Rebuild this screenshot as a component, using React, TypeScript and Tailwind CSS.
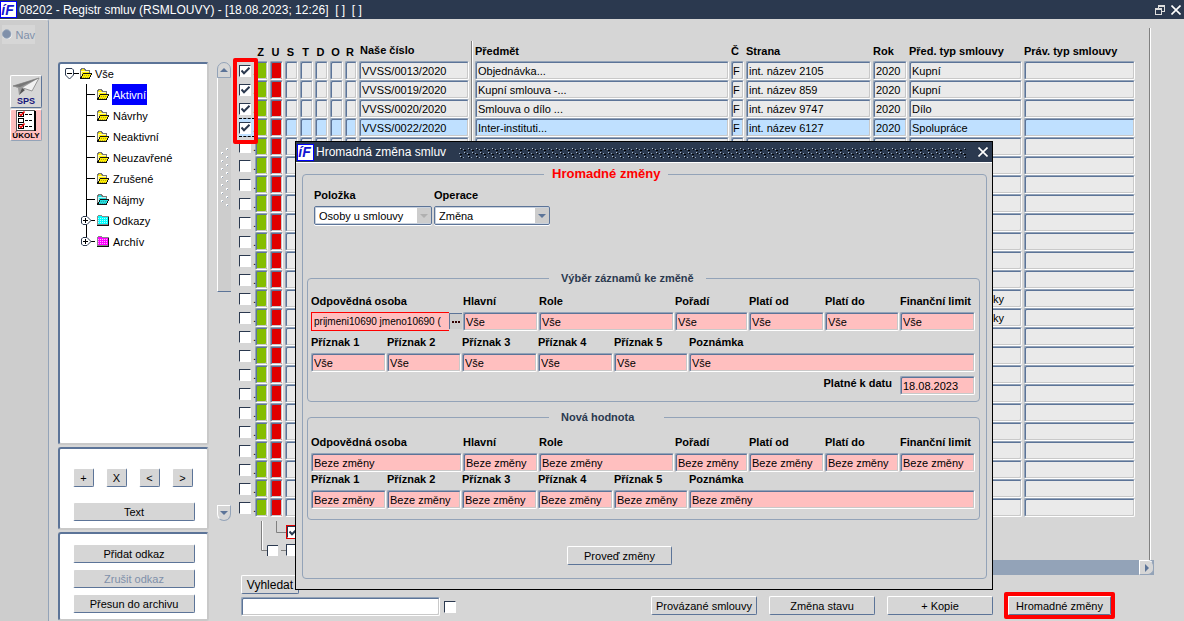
import React from "react";

const BEVEL_IN =
  "border border-t-[#93a3b8] border-l-[#93a3b8] border-r-white border-b-white shadow-[inset_1px_1px_0_#5c7498,inset_-1px_-1px_0_#c9c9c9]";
const BEVEL_OUT =
  "rounded-[2px] border border-t-white border-l-white border-r-[#5c7498] border-b-[#5c7498] bg-[#d6d6d6]";
const PANEL =
  "rounded-[3px] border-2 border-t-[#5c7498] border-l-[#5c7498] border-r-[#c9c9c9] border-b-[#c9c9c9] bg-white";

function Logo() {
  return (
    <span className="flex size-[17px] shrink-0 items-center justify-center border border-[#0000ff] bg-white pr-[2px] text-[14px] leading-none font-bold text-[#1414d2] italic">
      íF
    </span>
  );
}

function CloseIcon() {
  return (
    <svg width="10" height="10" viewBox="0 0 10 10" stroke="#fff" strokeWidth="1.6">
      <path d="M0.5 0.5L9.5 9.5M9.5 0.5L0.5 9.5" />
    </svg>
  );
}

function Check({ checked = false, label, alert = false }: { checked?: boolean; label: string; alert?: boolean }) {
  return (
    <span className={alert ? "relative flex border border-[#e00000]" : "relative flex"}>
      <input
        type="checkbox"
        defaultChecked={checked}
        aria-label={label}
        className="size-[12px] shrink-0 appearance-none border border-t-[#2b394f] border-r-white border-b-white border-l-[#2b394f] bg-white"
      />
      {checked && (
        <svg className="pointer-events-none absolute top-[2px] left-[2px]" width="9" height="8" viewBox="0 0 9 8" fill="none" stroke="#2b394f" strokeWidth="2">
          <path d="M0.5 3.5L3 6.2L8.5 0.8" />
        </svg>
      )}
    </span>
  );
}

function Button({ children, className = "", disabled = false }: { children: React.ReactNode; className?: string; disabled?: boolean }) {
  return (
    <button
      type="button"
      disabled={disabled}
      className={`${BEVEL_OUT} flex h-[19px] items-center justify-center whitespace-nowrap ${disabled ? "text-[#7f90aa]" : "text-black"} ${className}`}
    >
      {children}
    </button>
  );
}

/* ---------- navigation tree ---------- */

function OpenFolder({ color }: { color: string }) {
  return (
    <svg className="shrink-0" width="14" height="12" viewBox="0 0 14 12" shapeRendering="crispEdges">
      <path d="M1.5 10.5V2.5L2.5 0.5H5.5L6.5 2.5H10.5V5" fill={color} stroke="#777" />
      <path d="M2 3.5H10M2.5 3V9" fill="none" stroke="#fff" opacity="0.7" />
      <path d="M1.5 10.5L4.5 5.5H12.5L10.5 10.5Z" fill={color} stroke="#111" />
      <path d="M5 7.5H11M4 9.5H10" stroke="#444" strokeDasharray="1 1" opacity="0.4" />
    </svg>
  );
}

function ClosedFolder({ color }: { color: string }) {
  return (
    <svg className="shrink-0" width="14" height="12" viewBox="0 0 14 12" shapeRendering="crispEdges">
      <path d="M1.5 9.5V1.5L2.5 0.5H5.5L6.5 1.5H12.5V9.5Z" fill={color} stroke="#888" />
      <path d="M1 10.5H12.5V2" fill="none" stroke="#111" />
      <path d="M2 3.5H12M2 5.5H12M2 7.5H12" stroke="#fff" strokeDasharray="1 1" opacity="0.7" />
    </svg>
  );
}

type Node = { name: string; icon: "open" | "closed"; color: string; expandable?: boolean; selected?: boolean };

const NODES: Node[] = [
  { name: "Aktivní", icon: "open", color: "#ffee00", selected: true },
  { name: "Návrhy", icon: "open", color: "#ffee00" },
  { name: "Neaktivní", icon: "open", color: "#ffee00" },
  { name: "Neuzavřené", icon: "open", color: "#ffee00" },
  { name: "Zrušené", icon: "open", color: "#ffee00" },
  { name: "Nájmy", icon: "open", color: "#22dddd" },
  { name: "Odkazy", icon: "closed", color: "#00ffff", expandable: true },
  { name: "Archív", icon: "closed", color: "#ff00ff", expandable: true },
];

function Tree() {
  return (
    <ul className={`${PANEL} h-[383px] text-[11px]`}>
      <li className="pl-[3px]">
        <div className="flex h-[20px] items-center">
          <svg width="16" height="14" viewBox="0 0 16 14" fill="none" stroke="#2b394f">
            <path d="M3 1.5H9L10.5 3V8L6.5 12L2.5 8V3Z" fill="#fff" />
            <path d="M4 6.5H9" stroke="#000" />
            <path d="M11 6.5H16" stroke="#000" />
          </svg>
          <OpenFolder color="#ffee00" />
          <span className="pl-[2px]">Vše</span>
        </div>
        <ul className="pl-[15px]">
          {NODES.map((n, i) => (
            <li key={n.name} className="flex h-[21px] items-center">
              <svg className="shrink-0" width="18" height="21" viewBox="0 0 18 21" fill="none" stroke="#000">
                <path d={i === NODES.length - 1 ? "M8.5 0V10" : "M8.5 0V21"} />
                <path d="M8 10.5H17" />
                {n.expandable && (
                  <>
                    <path d="M5 6.5H9L13 10.5L9 14.5H5L3.5 13V8Z" fill="#fff" stroke="#2b394f" />
                    <path d="M5 10.5H10M7.5 8V13" />
                  </>
                )}
              </svg>
              {n.icon === "open" ? <OpenFolder color={n.color} /> : <ClosedFolder color={n.color} />}
              <a
                href="#"
                className={
                  n.selected
                    ? "ml-[2px] flex h-[21px] items-center bg-[#0000ff] px-[1px] text-white"
                    : "ml-[2px] flex h-[21px] items-center px-[1px] text-black"
                }
              >
                {n.name}
              </a>
            </li>
          ))}
        </ul>
      </li>
    </ul>
  );
}

function Rail() {
  return (
    <nav className="flex w-[49px] shrink-0 flex-col items-start rounded-tr-[3px] border-t border-r border-t-white border-r-[#93a3b8] bg-[#cdcdcd]">
      <button type="button" className="mt-[5px] ml-[2px] flex h-[19px] w-[33px] items-center gap-[3px] bg-[#d6d6d6] text-[11px] text-[#7f90aa]">
        <svg width="11" height="11" viewBox="0 0 11 11">
          <circle cx="5.5" cy="5.5" r="5" fill="#fff" />
          <circle cx="5" cy="5" r="4.5" fill="#7f90aa" stroke="#93a3b8" />
        </svg>
        Nav
      </button>
      <button type="button" className={`${BEVEL_OUT} mt-[31px] ml-[10px] flex h-[33px] w-[32px] flex-col items-center`}>
        <svg width="28" height="21" viewBox="0 0 28 21">
          <path d="M1 10L27 2L20 15L11 12Z" fill="#f1f1f1" stroke="#777" strokeWidth="0.7" />
          <path d="M1 10L27 2L10 12L7 19L6 12Z" fill="#9a9a9a" />
          <path d="M10 12L13 14L7 19Z" fill="#555" />
          <path d="M1 10L27 2L8 11Z" fill="#777" />
        </svg>
        <span className="text-[9px] leading-[9px] font-bold text-[#14147a]">SPS</span>
      </button>
      <button type="button" className="mt-[1px] ml-[10px] flex h-[32px] w-[32px] flex-col items-center rounded-[2px] border border-t-white border-r-[#93a3b8] border-b-[#93a3b8] border-l-white bg-[#ffbfbf]">
        <svg width="22" height="21" viewBox="0 0 22 21">
          <rect x="1.5" y="0.5" width="18" height="20" fill="#fff" stroke="#555" />
          <path d="M20 1V21" stroke="#000" strokeWidth="2" />
          <g fill="none" stroke="#000">
            <rect x="3.5" y="2.5" width="5" height="4" />
            <rect x="3.5" y="8.5" width="5" height="4" />
            <rect x="3.5" y="14.5" width="5" height="4" />
          </g>
          <path d="M10 4.5H18M10 10.5H18M10 16.5H18" stroke="#000" strokeDasharray="3 1" />
          <path d="M4 3.5L6 5.5L9.5 1.5M4 15.5L6 17.5L9.5 13.5" fill="none" stroke="#f00000" strokeWidth="1.5" />
        </svg>
        <span className="text-[8px] leading-[9px] font-bold text-black">ÚKOLY</span>
      </button>
    </nav>
  );
}

/* ---------- contract table ---------- */

type Row = { no: string; subject: string; f: string; party: string; year: string; type: string };

const DATA: Row[] = [
  { no: "VVSS/0013/2020", subject: "Objednávka...", f: "F", party: "int. název 2105", year: "2020", type: "Kupní" },
  { no: "VVSS/0019/2020", subject: "Kupní smlouva -...", f: "F", party: "int. název 859", year: "2020", type: "Kupní" },
  { no: "VVSS/0020/2020", subject: "Smlouva o dílo ...", f: "F", party: "int. název 9747", year: "2020", type: "Dílo" },
  { no: "VVSS/0022/2020", subject: "Inter-instituti...", f: "F", party: "int. název 6127", year: "2020", type: "Spolupráce" },
];
const EMPTY: Row = { no: "", subject: "", f: "", party: "", year: "", type: "" };
const ROWS: Row[] = Array.from({ length: 24 }, (_, i) => DATA[i] ?? EMPTY);
const SELECTED = 3;

function Cell({ children, bg, className = "pl-[2px]" }: { children?: React.ReactNode; bg: string; className?: string }) {
  return (
    <td className="p-0 pr-[2px] align-top">
      <div className={`${BEVEL_IN} ${bg} flex h-[19px] items-center overflow-hidden rounded-[2px] whitespace-nowrap ${className}`}>
        {children}
      </div>
    </td>
  );
}

function Contracts() {
  return (
    <div className="relative flex-1">
      <table className="w-full table-fixed border-collapse text-[11px] leading-[14px]">
        <colgroup>
          <col className="w-[16px]" />
          <col className="w-[15px]" />
          <col className="w-[15px]" />
          <col className="w-[15px]" />
          <col className="w-[15px]" />
          <col className="w-[15px]" />
          <col className="w-[15px]" />
          <col className="w-[14px]" />
          <col className="w-[112px]" />
          <col className="w-[4px]" />
          <col />
          <col className="w-[15px]" />
          <col className="w-[127px]" />
          <col className="w-[36px]" />
          <col className="w-[115px]" />
          <col className="w-[113px]" />
        </colgroup>
        <thead>
          <tr className="h-[20px] text-left align-top whitespace-nowrap">
            <th className="p-0" aria-label="Výběr" />
            {["Z", "U", "S", "T", "D", "O", "R"].map((h) => (
              <th key={h} className="p-0 pt-[4px] pr-[4px] text-center">
                {h}
              </th>
            ))}
            <th className="p-0 pt-[2px] pl-[1px]">Naše číslo</th>
            <th className="p-0">
              <div className="h-[20px] w-[2px] border-r border-l border-r-white border-l-[#808080]" />
            </th>
            {["Předmět", "Č", "Strana", "Rok", "Před. typ smlouvy", "Práv. typ smlouvy"].map((h) => (
              <th key={h} className="p-0 pt-[3px]">
                {h}
              </th>
            ))}
          </tr>
        </thead>
        <tbody>
          {ROWS.map((r, i) => {
            const bg = i === SELECTED ? "bg-[#bfe0ff]" : "bg-[#eaeaea]";
            return (
              <tr key={i} className="h-[19px]">
                <td className="p-0 align-top">
                  <div
                    className={
                      i === SELECTED
                        ? "flex h-[19px] items-center gap-[2px] border-y border-dashed border-black bg-[#bfe0ff]"
                        : "flex h-[19px] items-center gap-[2px]"
                    }
                  >
                    <Check checked={i < 4} label={`Vybrat řádek ${i + 1}`} />
                    <span>.</span>
                  </div>
                </td>
                <Cell bg="bg-[#84bd00]" />
                <Cell bg="bg-[#e00000]" />
                <Cell bg={bg} />
                <Cell bg={bg} />
                <Cell bg={bg} />
                <Cell bg={bg} />
                <Cell bg={bg} />
                <Cell bg={bg}>{r.no}</Cell>
                {i === 0 && (
                  <td rowSpan={24} className="p-0 align-top">
                    <div className="h-[456px] w-[2px] border-r border-l border-r-white border-l-[#808080]" />
                  </td>
                )}
                <Cell bg={bg}>{r.subject}</Cell>
                <Cell bg={bg} className="pl-[1px]">{r.f}</Cell>
                <Cell bg={bg}>{r.party}</Cell>
                <Cell bg={bg}>{r.year}</Cell>
                {i === 12 || i === 13 ? (
                  <Cell bg={bg} className="pl-[83px]">
                    ky
                  </Cell>
                ) : (
                  <Cell bg={bg}>{r.type}</Cell>
                )}
                <Cell bg={bg} />
              </tr>
            );
          })}
        </tbody>
      </table>
      <div className="pointer-events-none absolute top-[17px] left-[-6px] h-[86px] w-[25px] rounded-[2px] border-4 border-[#ff0000]" />
    </div>
  );
}

function RowScroller() {
  return (
    <div className="mt-[21px] mr-[8px] flex h-[459px] w-[14px] shrink-0 flex-col">
      <button type="button" aria-label="Nahoru" className="flex h-[16px] items-center justify-center rounded-t-full border border-[#93a3b8] bg-[#d6d6d6]">
        <svg width="8" height="4" viewBox="0 0 8 4" fill="#5c7498">
          <path d="M0 4L4 0L8 4Z" />
        </svg>
      </button>
      <div className="flex h-[214px] items-start justify-center border-b border-l border-b-[#5c7498] border-l-white bg-[#cdcdcd] pt-[70px]">
        <svg width="10" height="60" shapeRendering="crispEdges">
          <defs>
            <pattern id="grip" width="10" height="8" patternUnits="userSpaceOnUse">
              <path d="M6 0h2v2h-2zM1 4h2v2h-2z" fill="#fff" />
              <path d="M7 1h1v1h-1zM2 5h1v1h-1z" fill="#93a3b8" />
            </pattern>
          </defs>
          <rect width="10" height="60" fill="url(#grip)" />
        </svg>
      </div>
      <div className="flex-1" />
      <button type="button" aria-label="Dolů" className="flex h-[16px] items-center justify-center rounded-b-full border border-t-white border-r-[#93a3b8] border-b-[#93a3b8] border-l-white bg-[#d6d6d6]">
        <svg width="8" height="4" viewBox="0 0 8 4" fill="#5c7498">
          <path d="M0 0L4 4L8 0Z" />
        </svg>
      </button>
    </div>
  );
}

/* ---------- dialog ---------- */

function Field({ label, value, className = "" }: { label: string; value: string; className?: string }) {
  return (
    <label className={`flex min-w-0 flex-col ${className}`}>
      <span className="h-[18px] font-bold whitespace-nowrap">{label}</span>
      <input
        type="text"
        defaultValue={value}
        className={`${BEVEL_IN} mr-[1px] h-[19px] min-w-0 rounded-[2px] bg-[#ffbfbf] pl-[2px]`}
      />
    </label>
  );
}

function PersonField() {
  return (
    <div className="flex min-w-0 flex-col">
      <label htmlFor="person" className="h-[18px] font-bold whitespace-nowrap">
        Odpovědná osoba
      </label>
      <div className="mr-[1px] flex h-[19px]">
        <input
          id="person"
          type="text"
          defaultValue="prijmeni10690 jmeno10690 ("
          className="min-w-0 flex-1 border border-r-0 border-[#ff0000] bg-[#ffbfbf] pl-[2px] text-[10px]"
        />
        <button type="button" aria-label="Vybrat osobu" className="mt-[1px] flex h-[16px] w-[13px] items-center justify-center border-t border-l border-[#5c7498] bg-[#cdcdcd]">
          <svg width="8" height="2" viewBox="0 0 8 2" fill="#300">
            <path d="M0 0h2v2h-2zM3 0h2v2h-2zM6 0h2v2h-2z" />
          </svg>
        </button>
      </div>
    </div>
  );
}

function Select({ label, value, width, muted = false }: { label: string; value: string; width: string; muted?: boolean }) {
  return (
    <label className={`flex flex-col ${width}`}>
      <span className="h-[18px] font-bold">{label}</span>
      <span className="relative flex">
        <select className="h-[19px] w-full appearance-none rounded-[2px] border border-[#5c7498] bg-white pl-[4px] shadow-[0_1px_0_#fff,inset_0_0_0_1px_#c9d1dc]">
          <option>{value}</option>
        </select>
        <span className="pointer-events-none absolute top-[2px] right-[1px] flex h-[15px] w-[14px] items-center justify-center bg-[#cdcdcd]">
          <svg width="8" height="4" viewBox="0 0 8 4" className={muted ? "fill-[#b0b0b0]" : "fill-[#5c7498]"}>
            <path d="M0 0H8L4 4Z" />
          </svg>
        </span>
      </span>
    </label>
  );
}

const LINE1 = ["Hlavní", "Role", "Pořadí", "Platí od", "Platí do", "Finanční limit"];
const LINE2 = ["Příznak 1", "Příznak 2", "Příznak 3", "Příznak 4", "Příznak 5", "Poznámka"];
const GRID1 = "grid grid-cols-[152px_76px_1fr_74px_76px_75px_76px]";
const GRID2 = "grid grid-cols-[76px_75px_76px_76px_75px_1fr]";

function Dialog() {
  return (
    <div
      role="dialog"
      aria-label="Hromadná změna smluv"
      className="absolute top-[141px] left-[295px] flex w-[698px] flex-col border border-black bg-[#d6d6d6] text-[11px] leading-[14px]"
    >
      <header className="flex h-[21px] items-center border-b border-white bg-[#2b394f] pr-[4px] pl-[1px] text-[12px] text-white">
        <Logo />
        <h2 className="pr-[13px] pl-[2px] whitespace-nowrap">Hromadná změna smluv</h2>
        <svg className="h-[11px] min-w-0 flex-1" shapeRendering="crispEdges">
          <defs>
            <pattern id="bumps" width="8" height="8" patternUnits="userSpaceOnUse">
              <path d="M1 1h1v1h-1zM5 5h1v1h-1z" fill="#b4c0d0" />
              <path d="M4 2h1v1h-1zM0 6h1v1h-1z" fill="#93a3b8" />
              <path d="M2 2h1v1h-1zM6 6h1v1h-1zM5 3h2v1h-2zM1 7h2v1h-2z" fill="#000" />
            </pattern>
          </defs>
          <rect width="100%" height="11" fill="url(#bumps)" />
        </svg>
        <button type="button" aria-label="Zavřít" className="ml-[12px]">
          <CloseIcon />
        </button>
      </header>
      <fieldset className="mt-[3px] mr-[5px] mb-[10px] ml-[6px] flex flex-col rounded-[4px] border border-[#93a3b8] pr-[6px] pb-[13px] pl-[4px]">
        <legend className="ml-[237px] px-[8px] text-[13px] leading-[16px] font-bold text-[#ff0000]">Hromadné změny</legend>
        <div className="flex gap-[2px] pt-[6px] pl-[7px]">
          <Select label="Položka" value="Osoby u smlouvy" width="w-[118px]" muted />
          <Select label="Operace" value="Změna" width="w-[116px]" />
        </div>
        <fieldset className="mt-[46px] flex flex-col rounded-[4px] border border-[#93a3b8] px-[3px] pb-[6px]">
          <legend className="ml-[238px] px-[12px] font-bold text-[#2b394f]">Výběr záznamů ke změně</legend>
          <div className={`${GRID1} pt-[9px]`}>
            <PersonField />
            {LINE1.map((l) => (
              <Field key={l} label={l} value="Vše" />
            ))}
          </div>
          <div className={`${GRID2} pt-[4px]`}>
            {LINE2.map((l) => (
              <Field key={l} label={l} value="Vše" />
            ))}
          </div>
          <label className="flex justify-end gap-[8px] pt-[4px] font-bold">
            Platné k datu
            <input
              type="text"
              defaultValue="18.08.2023"
              className={`${BEVEL_IN} mr-[1px] h-[19px] w-[75px] rounded-[2px] bg-[#ffbfbf] pl-[2px] font-normal`}
            />
          </label>
        </fieldset>
        <fieldset className="mt-[8px] flex flex-col rounded-[4px] border border-[#93a3b8] px-[3px] pb-[10px]">
          <legend className="ml-[238px] pr-[30px] pl-[12px] font-bold text-[#2b394f]">Nová hodnota</legend>
          <div className={`${GRID1} pt-[11px]`}>
            {["Odpovědná osoba", ...LINE1].map((l) => (
              <Field key={l} label={l} value="Beze změny" />
            ))}
          </div>
          <div className={GRID2}>
            {LINE2.map((l) => (
              <Field key={l} label={l} value="Beze změny" />
            ))}
          </div>
        </fieldset>
        <Button className="mt-[26px] ml-[260px] w-[105px]">Proveď změny</Button>
      </fieldset>
    </div>
  );
}

/* ---------- page ---------- */

export default function App() {
  return (
    <div className="relative flex min-h-screen flex-col overflow-hidden bg-[#d6d6d6] font-['Liberation_Sans',Arial,sans-serif] text-[11px] leading-[14px] text-black">
      <header className="flex h-[19px] items-center bg-[#2b394f] pr-[3px] text-[12px] text-white">
        <Logo />
        <h1 className="flex-1 pl-[2px] whitespace-pre">08202 - Registr smluv (RSMLOUVY) - [18.08.2023; 12:26]  [ ]  [ ]</h1>
        <button type="button" aria-label="Obnovit" className="mr-[6px]">
          <svg width="10" height="10" viewBox="0 0 10 10" fill="none" stroke="#ddd" shapeRendering="crispEdges">
            <path d="M3 3V0.5H9.5V6H7" />
            <path d="M3 1H10" strokeWidth="1" />
            <rect x="0.5" y="3.5" width="6" height="6" />
            <path d="M0 4.5H7" />
          </svg>
        </button>
        <button type="button" aria-label="Zavřít okno">
          <CloseIcon />
        </button>
      </header>

      <div className="flex flex-1">
        <Rail />
        <aside className="ml-[9px] flex w-[151px] shrink-0 flex-col gap-[2px] pt-[43px]">
          <Tree />
          <div className={`${PANEL} flex flex-col gap-[15px] px-[13px] pt-[19px] pb-[7px]`}>
            <div className="flex gap-[12px]">
              {["+", "X", "<", ">"].map((t) => (
                <Button key={t} className="w-[21px]">
                  {t}
                </Button>
              ))}
            </div>
            <Button className="w-[122px]">Text</Button>
          </div>
          <div className={`${PANEL} flex flex-col gap-[6px] px-[13px] pt-[10px] pb-[6px]`}>
            <Button className="w-[122px]">Přidat odkaz</Button>
            <Button className="w-[122px]" disabled>
              Zrušit odkaz
            </Button>
            <Button className="w-[122px]">Přesun do archivu</Button>
          </div>
        </aside>

        <main className="flex min-w-0 flex-1 flex-col pt-[9px] pl-[8px]">
          <section className="mr-[34px] flex h-[532px] flex-col border-r border-[#808080] pr-[12px] shadow-[1px_0_0_#fff]">
            <div className="flex pt-[13px]">
              <RowScroller />
              <Contracts />
            </div>
            <div className="flex pl-[44px]">
              <svg width="25" height="36" fill="none" stroke="#808080">
                <path d="M0.5 0V29.5H6M15.5 0V11.5H25M20 29.5H25" />
                <path d="M1.5 0V29" stroke="#fff" />
                <path d="M6 24h11v11h-11z" fill="#fff" stroke="none" />
                <path d="M6.5 35V24.5H17" stroke="#2b394f" />
              </svg>
              <div className="flex flex-col gap-[5px] pt-[4px]">
                <Check checked alert label="Filtr U" />
                <Check label="Filtr S" />
              </div>
            </div>
          </section>
          <div className="mr-[30px] ml-[79px] flex h-[15px] justify-end bg-[#93a3b8]">
            <button type="button" aria-label="Doprava" className="flex w-[15px] items-center justify-center rounded-r-[6px] border border-t-white border-r-[#93a3b8] border-b-[#93a3b8] border-l-white bg-[#d6d6d6]">
              <svg width="4" height="8" viewBox="0 0 4 8" fill="#5c7498">
                <path d="M0 0L4 4L0 8Z" />
              </svg>
            </button>
          </div>
          <div className="flex items-end pl-[24px]">
            <div className="flex flex-col gap-[3px]">
              <Button className="w-[58px] text-[12px]">Vyhledat</Button>
              <div className="flex items-center gap-[4px]">
                <input type="text" aria-label="Vyhledat" className={`${BEVEL_IN} h-[19px] w-[199px] rounded-[2px] bg-white pl-[2px]`} />
                <Check label="Hledat přesně" />
              </div>
            </div>
            <div className="flex flex-1 items-center justify-end gap-[12px] pr-[69px]">
              <Button className="w-[106px]">Provázané smlouvy</Button>
              <Button className="w-[106px]">Změna stavu</Button>
              <Button className="w-[106px]">+ Kopie</Button>
              <div className="-my-[3px] -ml-[1px] rounded-[2px] border-4 border-[#ff0000]">
                <Button className="w-[103px]">Hromadné změny</Button>
              </div>
            </div>
          </div>
        </main>
      </div>
      <Dialog />
    </div>
  );
}
